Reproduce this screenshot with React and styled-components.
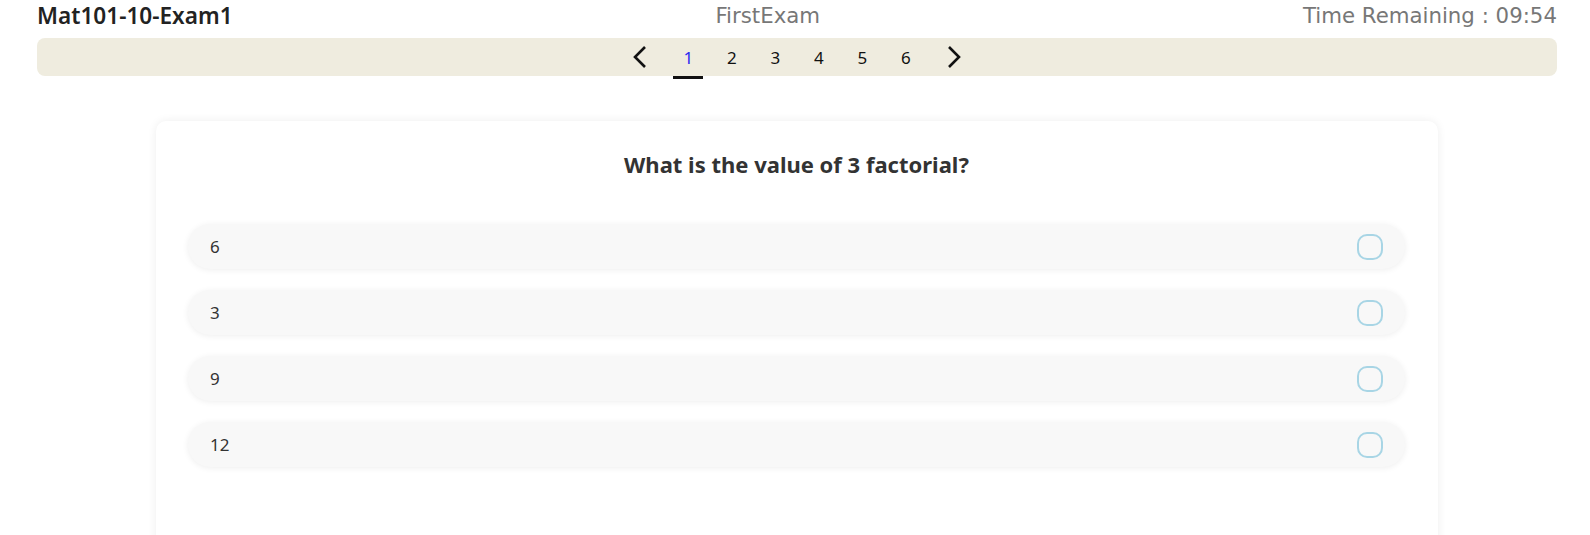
import React, { useState } from "react";
import styled, { createGlobalStyle } from "styled-components";

const GlobalStyle = createGlobalStyle`
  body {
    margin: 0;
    background: #fff;
    font-family: "Noto Sans", "Liberation Sans", sans-serif;
  }
`;

const Page = styled.div`
  padding: 0 33px 0 37px;
`;

const Header = styled.header`
  display: flex;
  justify-content: space-between;
  align-items: center;
  height: 30px;
`;

const Title = styled.h1`
  margin: 0;
  font-size: 22.6px;
  font-weight: 600;
  color: #222;
`;

const ExamName = styled.span`
  font-family: "DejaVu Sans", sans-serif;
  font-size: 21.3px;
  color: #777;
`;

const Timer = styled.span`
  font-family: "DejaVu Sans", sans-serif;
  font-size: 21.3px;
  color: #777;
`;

const NavBar = styled.nav`
  margin-top: 8px;
  height: 38px;
  background: #efecdf;
  border-radius: 8px;
  display: flex;
  justify-content: center;
  align-items: center;
  gap: 13.5px;
`;

const Arrow = styled.button`
  width: 24px;
  height: 30px;
  margin: 0 8px;
  padding: 0;
  border: none;
  background: none;
  display: flex;
  align-items: center;
  justify-content: center;
  cursor: pointer;
`;

const PageButton = styled.button`
  position: relative;
  width: 30px;
  height: 38px;
  padding: 0;
  border: none;
  background: none;
  font-family: "Noto Sans", "Liberation Sans", sans-serif;
  font-size: 17px;
  color: ${(props) => (props.active ? "#2b2bf0" : "#111")};
  cursor: pointer;
  &::after {
    content: "";
    display: ${(props) => (props.active ? "block" : "none")};
    position: absolute;
    left: 0;
    right: 0;
    bottom: -3px;
    height: 3px;
    background: #111;
  }
`;

const Card = styled.section`
  width: 1282px;
  margin: 45px 0 0 119px;
  min-height: 430px;
  background: #fff;
  border-radius: 10px;
  box-shadow: 0 0 10px rgba(0, 0, 0, 0.07);
  padding: 28px 33px 40px 32px;
  box-sizing: border-box;
`;

const Question = styled.h2`
  margin: 0 0 45px;
  line-height: 30px;
  text-align: center;
  font-size: 22px;
  font-weight: 700;
  color: #333;
`;

const Options = styled.div`
  display: flex;
  flex-direction: column;
  gap: 21px;
`;

const Option = styled.label`
  display: flex;
  align-items: center;
  justify-content: space-between;
  height: 45px;
  padding: 0 22px 0 22px;
  background: #f8f8f8;
  border-radius: 23px;
  box-shadow: 0 1px 6px rgba(0, 0, 0, 0.07);
  font-size: 17px;
  color: #333;
  cursor: pointer;
`;

const Check = styled.span`
  width: 22px;
  height: 22px;
  border: 2px solid #a8d5e5;
  border-radius: 10px;
  background: ${(props) => (props.checked ? "#a8d5e5" : "transparent")};
`;

const Chevron = ({ dir }) => (
  <svg width="16" height="24" viewBox="0 0 16 24">
    <polyline
      points={dir === "left" ? "13,2 3,12 13,22" : "3,2 13,12 3,22"}
      fill="none"
      stroke="#111"
      strokeWidth="2.6"
    />
  </svg>
);

const answers = ["6", "3", "9", "12"];

const App = () => {
  const [page, setPage] = useState(1);
  const [picked, setPicked] = useState(null);
  return (
    <Page>
      <GlobalStyle />
      <Header>
        <Title>Mat101-10-Exam1</Title>
        <ExamName>FirstExam</ExamName>
        <Timer>Time Remaining : 09:54</Timer>
      </Header>
      <NavBar>
        <Arrow onClick={() => setPage(Math.max(1, page - 1))}>
          <Chevron dir="left" />
        </Arrow>
        {[1, 2, 3, 4, 5, 6].map((n) => (
          <PageButton key={n} active={n === page} onClick={() => setPage(n)}>
            {n}
          </PageButton>
        ))}
        <Arrow onClick={() => setPage(Math.min(6, page + 1))}>
          <Chevron dir="right" />
        </Arrow>
      </NavBar>
      <Card>
        <Question>What is the value of 3 factorial?</Question>
        <Options>
          {answers.map((a, i) => (
            <Option key={a} onClick={() => setPicked(i)}>
              {a}
              <Check checked={picked === i} />
            </Option>
          ))}
        </Options>
      </Card>
    </Page>
  );
};

export default App;
